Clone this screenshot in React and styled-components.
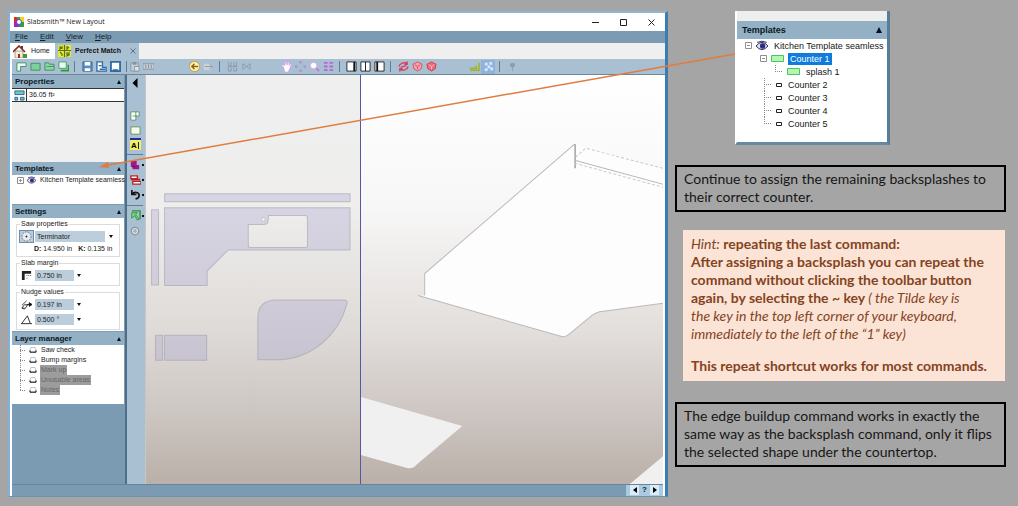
import React, { useState } from 'react'
import styled, { createGlobalStyle, css } from 'styled-components'

const GlobalStyle = createGlobalStyle`
*{
  box-sizing:border-box;
}
body{
  margin:0;
  background:#a5a5a5;
}
ul{
  list-style:none;
  margin:0;
  padding:0;
}
button{
  font:inherit;
  color:inherit;
  padding:0;
  border:0;
  background:none;
}
`

const sans = '"Liberation Sans", Arial, sans-serif'

const Page = styled.main`
position:relative;
display:grid;
grid-template-columns:minmax(0, 1fr) 331px;
gap:7px;
min-height:100vh;
padding:11px 12px 9px 8px;
`

const Window = styled.section`
display:flex;
flex-direction:column;
border:2px solid #7fb2d6;
border-top-color:#8fb4cf;
border-right:3px solid #3b7db3;
border-bottom:1px solid #6c93ad;
background:#fff;
font:7px/10px ${sans};
color:#222;
`

const TitleBar = styled.header`
display:flex;
align-items:center;
height:18px;
padding-left:4px;
background:#fff;
font:7px/12px "Open Sans", sans-serif;
color:#222;
& > h1{
  margin:0 auto 0 3px;
  font:inherit;
}
`

const WinButton = styled.button`
width:28px;
height:18px;
display:grid;
place-items:center;
`

const MenuBar = styled.nav`
display:flex;
gap:12px;
height:12px;
padding-left:5px;
background:#7b9bb3;
font-size:8px;
line-height:12px;
color:#101c28;
`

const Tabs = styled.nav`
display:flex;
height:16px;
background:#efefef;
`

const Tab = styled.button`
display:flex;
align-items:center;
gap:4px;
height:16px;
padding:0 3px;
background:${p => p.$active ? '#a9c0d3' : '#fff'};
font-weight:${p => p.$active ? 700 : 400};
width:${p => p.$active ? '84px' : '45px'};
color:#141414;
& > svg:last-child{
  margin-left:auto;
}
`

const Toolbar = styled.div`
display:flex;
align-items:center;
height:16px;
background:#a9c0d3;
border-bottom:1px solid #6f8599;
margin-left:2px;
`

const Group = styled.div`
display:flex;
margin-left:${p => p.$before || 0}px;
`

const Tool = styled.button`
position:relative;
display:grid;
place-items:center;
width:14px;
height:${p => p.$tall ? 15 : 14}px;
background:${p => p.$on ? '#8fb3dc' : 'none'};
${p => p.$menu && css`
&::after{
  content:'';
  position:absolute;
  right:-2px;
  top:7px;
  width:2px;
  height:2px;
  background:#111;
}
`}
`

const Sep = styled.span`
width:1px;
height:11px;
margin-left:4px;
background:#5f7d96;
`

const Body = styled.div`
display:flex;
flex:1;
min-height:0;
margin:0 2px;
`

const Sidebar = styled.aside`
width:115px;
flex:none;
background:#7b9bb3;
border-right:2px solid #4f6f88;
padding-right:1px;
`

const Head = styled.button`
display:flex;
align-items:center;
justify-content:space-between;
width:100%;
height:${p => p.$large ? 18 : 13}px;
padding:0 ${p => p.$large ? 5 : 3}px;
background:#93b0c5;
font-weight:700;
font-size:${p => p.$large ? 9 : 8}px;
color:#0c1722;
`

const Content = styled.div`
height:${p => p.$height}px;
margin-bottom:${p => p.$after || 0}px;
background:${p => p.$grey ? '#efefef' : '#fff'};
`

const AreaRow = styled.div`
display:flex;
align-items:center;
height:14px;
border-bottom:1px solid #333;
border-top:1px solid #333;
background:#fff;
& > span{
  width:15px;
  height:13px;
  display:grid;
  place-items:center;
  border-right:1px solid #333;
  margin-right:2px;
}
`

const TreeRow = styled.li`
display:flex;
align-items:center;
height:${p => p.$large ? 13 : 10}px;
gap:${p => p.$large ? 4 : 3}px;
padding-left:${p => p.$indent || 0}px;
white-space:nowrap;
& > svg{
  flex:none;
}
& > span{
  padding:0 ${p => p.$large ? 2 : 1}px;
  ${p => p.$selected && 'background:#0f7bdc; color:#fff;'}
  ${p => p.$disabled && 'background:#9c9c9c; color:#666;'}
}
`

const SettingsForm = styled.form`
padding:1px 4px 0 4px;
`

const Fieldset = styled.fieldset`
min-width:0;
height:${p => p.$height}px;
margin:0 0 1px;
padding:1px 0 0 2px;
border:1px solid #dcdcdc;
& > legend{
  height:10px;
  padding:0 1px;
  margin-left:1px;
}
`

const Field = styled.label`
display:flex;
align-items:center;
height:13px;
margin-bottom:2px;
& > i{
  display:grid;
  place-items:center;
  width:15px;
  height:13px;
  margin-right:1px;
  ${p => p.$framed && 'background:#b9cddd; border:1px solid #6b8cab;'}
}
& > select{
  appearance:none;
  width:${p => p.$wide ? 70 : 39}px;
  height:11px;
  padding:0 2px;
  border:0;
  border-radius:0;
  background:#bccddb;
  font:inherit;
  color:#222;
  margin-right:${p => p.$wide ? 4 : 3}px;
}
`

const Blade = styled.p`
display:flex;
gap:6px;
margin:0 0 0 15px;
line-height:8px;
white-space:nowrap;
`

const Strip = styled.div`
display:flex;
flex-direction:column;
align-items:center;
width:19px;
flex:none;
padding:1px 2px 0 0;
background:#a9c0d3;
border-right:1px solid #c9c6c4;
& > hr{
  width:16px;
  margin:3px 0 2px;
  border:0;
  border-top:1px solid #5f7d96;
}
`

const StripGroup = styled.div`
margin-top:${p => p.$before || 0}px;
`

const Pane = styled.div`
flex:${p => p.$grow} 1 0;
min-width:0;
overflow:hidden;
background:${p => p.$view3d
    ? 'linear-gradient(#fff 0%, #f8f7f7 32%, #e2dedb 63%, #d0c9c6 80%, #bab0a9 100%)'
    : 'linear-gradient(#efefef 0%, #efeeed 32%, #dedad7 63%, #cfc9c5 80%, #bab0a9 100%)'};
border-right:${p => p.$view3d ? '0' : '1px solid #5557a0'};
& > svg{
  display:block;
  width:100%;
  height:100%;
}
`

const StatusBar = styled.footer`
display:flex;
justify-content:flex-end;
height:12px;
margin:0 2px;
background:#7b9bb3;
border-top:1px solid #66849b;
`

const Pager = styled.div`
display:flex;
gap:1px;
padding:0 4px;
background:#a9cbe2;
& > button{
  width:9px;
  height:10px;
  display:grid;
  place-items:center;
  background:#dcebf5;
  font:700 8px/10px ${sans};
}
& > button:nth-child(2){
  background:none;
}
`

const Notes = styled.aside`
display:flex;
flex-direction:column;
font:14px/18px Lato, Carlito, Calibri, sans-serif;
color:#161616;
`

const Inset = styled.section`
width:155px;
height:134px;
margin:0 0 20px 60px;
padding-top:10px;
border-left:2px solid #fff;
border-right:3px solid #557c98;
border-bottom:3px solid #6489a3;
background:#eeeeee;
font:9px/12px ${sans};
`

const Note = styled.p`
margin:0;
padding:3px 7px 4px;
border:2px solid #000;
white-space:nowrap;
`

const Hint = styled.div`
margin:18px 1px 21px 8px;
padding:5px 8px 6px;
background:#fbe4d5;
color:#84431f;
font-weight:700;
white-space:nowrap;
& > p{
  margin:0;
}
& > p + p{
  margin-top:14px;
}
& em{
  font-weight:400;
}
`

const Arrow = styled.svg`
position:absolute;
left:0;
top:0;
width:740px;
height:180px;
pointer-events:none;
`

const icons = {
  shapeL: <path d="M1 2h10v4H5v5H1z" fill="#eafaf0" stroke="#3e8c62" />,
  rect: <path d="M1 2.500h10v7.500H1z" fill="#7fcf9a" stroke="#3e8c62" />,
  folder: <><path d="M1 2h4l1 1.500h5V10H1z" fill="#8dd6a3" stroke="#3e8c62" /><path d="M3 6h8" stroke="#3e8c62" /></>,
  copy: <><path d="M1 1h8v7H1z" fill="#e9fbef" stroke="#3e9c5c" /><path d="M3 10.500h8.500V4" fill="none" stroke="#2e9a3a" strokeWidth="2" /></>,
  save: <><path d="M1 1h10v10H1z" fill="#5d8ec0" stroke="#2f6ca5" /><path d="M3 1h6v4H3zM3 8h6v3H3z" fill="#fff" /></>,
  saveL: <><path d="M1 1v10h10V7H7V1z" fill="#fff" stroke="#2f6ca5" strokeWidth="1.500" /><path d="M3 5h3M4 9h6" stroke="#2f6ca5" strokeWidth="1.500" /></>,
  saveBox: <><path d="M1 1h10v10H1z" fill="#fff" stroke="#2f6ca5" strokeWidth="2" /><path d="M3 9h6v3H3z" fill="#2f6ca5" /></>,
  paste: <><path d="M2 2h8v9H2z" fill="#c3ced6" stroke="#8795a1" /><path d="M4 1h4v3H4z" fill="#8795a1" /><path d="M6 6h5v5H6z" fill="#dce3e8" stroke="#8795a1" /></>,
  ruler: <><path d="M0 3h12v6H0z" fill="#c9d0d5" stroke="#8795a1" /><path d="M3 4v4M6 4v4M9 4v4" stroke="#7e8b96" /></>,
  back: <><circle cx="6" cy="6" r="5.500" fill="#fff3b8" stroke="#c99d2c" /><path d="M10 6H3M6 3 3 6l3 3" fill="none" stroke="#8a6310" strokeWidth="1.500" /></>,
  next: <><path d="M1 3h8v7H1z" fill="#c9d2d8" /><path d="M2 6h8M7 3l3 3-3 3" fill="none" stroke="#8e9aa4" /></>,
  join: <path d="M1.500 1v4h3V1M7.500 1v4h3V1M1.500 7v4h3V7M7.500 7v4h3V7M1 6h10" stroke="#8a9aa8" fill="none" />,
  joinS: <path d="M2 3v6M10 3v6M2 3l4 3 4-3M2 9l4-3 4 3" stroke="#8a9aa8" fill="none" />,
  hand: <path d="M3 7 1 5l1-1 2 1-.500-3.500 1-.500L5.500 4V.500h1.200L7 4l1-3 1 .300L8.700 5l1.800-2 .800.800L9 9.500 8 12H4z" fill="#fff" stroke="#e08df0" strokeWidth=".700" />,
  move: <path d="M6 0v3M6 9v3M0 6h3M9 6h3M4 2l2-2 2 2M4 10l2 2 2-2M2 4 0 6l2 2M10 4l2 2-2 2" fill="none" stroke="#b582d6" />,
  zoom: <><circle cx="5" cy="5" r="3.500" fill="#fff" stroke="#e6a5ee" /><path d="m8 8 3 3" stroke="#c078d6" strokeWidth="2" /></>,
  grid: <path d="M1 1h4v2H1zM7 1h4v2H7zM1 5h4v2H1zM7 5h4v2H7zM1 9h4v2H1zM7 9h4v2H7z" fill="#b765d8" />,
  paneR: <><path d="M1 1h10v10H1z" fill="#fff" stroke="#222" /><path d="M9 1v10" stroke="#111" strokeWidth="2" /></>,
  paneM: <><path d="M1 1h10v10H1z" fill="#fff" stroke="#222" /><path d="M6 1v10" stroke="#111" /></>,
  paneL: <><path d="M1 1h10v10H1z" fill="#fff" stroke="#222" /><path d="M3.500 1v10" stroke="#111" strokeWidth="2" /></>,
  rotate: <path d="M1 6c1-4 6-5 9-3M10 .500V3.500H7M11 6c-1 4-6 5-9 3M2 11.500V8.500h3M3 7l6-2" fill="none" stroke="#d8405c" strokeWidth="1.500" />,
  cube: <><path d="m6 1 5 2.500-1 5L6 11 2 8.500l-1-5z" fill="#f1a4ad" stroke="#d9505f" /><path d="m3 4 3 2 3-2M6 6v3" fill="none" stroke="#d9505f" /></>,
  cubeFull: <><path d="m6 1 5 2.500-1 5L6 11 2 8.500l-1-5z" fill="#ee6a78" stroke="#cf3e50" /><path d="m3 4 3 2 3-2M6 6v3" fill="none" stroke="#fbd" /></>,
  slope: <path d="M1 10h10V2M1 8h7V5" fill="none" stroke="#a3b51e" strokeWidth="1.600" />,
  nodes: <path d="M2 2h3v3H2zM7 1h3v3H7zM5 5h3v3H5zM8 7h3v3H8zM2 8h3v3H2z" fill="#dbe9f7" />,
  pin: <path d="M6 2v9M4 3h4v3H4z" fill="#8d9ca8" stroke="#8d9ca8" />,
  collapse: <path d="M9 0v12L3 6z" fill="#000" />,
  piece: <><path d="M1 1h10v5H7v5H1z" fill="#fff" stroke="#5b7f64" /><path d="M7 1v5H3" fill="none" stroke="#2f9c3a" /></>,
  slab: <path d="M1 2h10v8H1z" fill="#f3fae6" stroke="#6c8a70" />,
  magenta: <><path d="M1 1h7v5h3v5H3V8H1z" fill="#a0168e" /><path d="M2 8h4" stroke="#401060" /></>,
  stack: <><path d="M1 2h7v3H1zM3 8h9v3H3z" fill="#fff" stroke="#b8232b" strokeWidth="1.500" /><path d="M1 6h10" stroke="#b8232b" strokeWidth="2" /></>,
  undo: <path d="M2 1v5h5M2 6c3-4 8-2 8 1 0 2-1 3-4 4" fill="none" stroke="#161616" strokeWidth="1.800" />,
  select: <><path d="M2 1h9v9" fill="none" stroke="#27933a" strokeWidth="1.500" /><path d="M2 3h6L6 5l4 5-2 1-3-5-3 3z" fill="#7be07b" stroke="#27933a" /></>,
  gear: <><circle cx="6" cy="6" r="4.500" fill="#d7dde1" stroke="#86929c" strokeWidth="1.500" /><circle cx="6" cy="6" r="1.500" fill="none" stroke="#86929c" /></>,
  area: <path d="M1 1h10v4H1zM1 8h3v3H1zM7 8h4v3H7z" fill="#72c4d4" stroke="#27647c" />,
  blade: <><circle cx="6" cy="6" r="5" fill="#e3eaf0" stroke="#6b7680" strokeDasharray="2 1" /><path d="M6 5v2M5 6h2" stroke="#223" /></>,
  margin: <><path d="M1 1h10v3H4v7H1z" fill="#222" /><path d="M6 6h5M6 9h2" stroke="#555" strokeDasharray="1 1" /></>,
  nudge: <><path d="M1 7 6 2M1 10l3-4 3 1-3 4zM1 10h3" fill="none" stroke="#333" /><path d="M6 6h3M9 4l3 2-3 2z" fill="#111" stroke="#111" /></>,
  angle: <path d="M0 10.500h12M1 10l6-8 3 8" fill="none" stroke="#222" />,
}

const Icon = ({ name, size = 12 }) => (
  <svg width={size} height={size} viewBox="0 0 12 12" aria-hidden="true">{icons[name]}</svg>
)

const Up = ({ size = 4 }) => (
  <svg width={size} height={size} viewBox="0 0 4 4" aria-hidden="true"><path d="M2 0 4 4H0z" fill="#05101c" /></svg>
)

const Down = () => (
  <svg width="4" height="3" viewBox="0 0 4 3" aria-hidden="true"><path d="M0 0h4L2 3z" fill="#111" /></svg>
)

const Eye = ({ size = 9 }) => (
  <svg width={size} height={size} viewBox="0 0 10 10" aria-hidden="true">
    <path d="M0 5q5-6 10 0-5 6-10 0z" fill="#e4e4f2" stroke="#25255a" strokeWidth=".800" />
    <circle cx="5.500" cy="5" r="2.200" fill="#2c2c88" />
    <path d="M1 2q4-2 8 0" fill="none" stroke="#25255a" strokeWidth=".800" />
  </svg>
)

const Expander = ({ open }) => (
  <svg width="7" height="7" viewBox="0 0 7 7" aria-hidden="true">
    <path d={open ? 'M.500.500h6v6h-6z M2 3.500h3' : 'M.500.500h6v6h-6z M2 3.500h3M3.500 2v3'} fill="#fff" stroke="#8e8e8e" />
  </svg>
)

// dotted elbow to the left of a leaf, the stem reaches up to the row above
const Branch = ({ last, height = 10, width = 8 }) => (
  <svg width={width} height={height} aria-hidden="true">
    <path d={`M.500 0v${last ? height / 2 : height}M0 ${Math.floor(height / 2) + 0.5}h${width}`} fill="none" stroke="#888" strokeDasharray="1 1" />
  </svg>
)

const Swatch = ({ green }) => green
  ? <svg width="13" height="7" aria-hidden="true"><path d="M.500.500h12v6h-12z" fill="#b4f5b4" stroke="#4fc45e" /></svg>
  : <svg width="6" height="4" aria-hidden="true"><path d="M.500.500h5v3h-5z" fill="#fff" stroke="#222" /></svg>

const Layer = () => (
  <svg width="8" height="6" viewBox="0 0 8 6" aria-hidden="true">
    <path d="M1 3 2 .500h4L7 3v2H1z" fill="#fff" stroke="#999" strokeWidth=".600" />
    <path d="M1 3.500v1.700h6V3.500" fill="none" stroke="#111" />
  </svg>
)

const toolbar = [
  { before: 2, tools: ['shapeL', 'rect', 'folder', 'copy'], sep: true },
  { before: 5, tools: ['save', 'saveL', 'saveBox'], sep: true },
  { before: 0, tools: ['paste', 'ruler'] },
  { before: 32, tools: ['back', 'next'], sep: true },
  { before: 5, tools: ['join', 'joinS'] },
  { before: 26, tools: ['hand', 'move', 'zoom', 'grid'], sep: true },
  { before: 4, tools: ['paneR', 'paneM', 'paneL'], sep: true },
  { before: 5, tools: ['rotate', 'cube', 'cubeFull'] },
  { before: 29, tools: ['slope', 'nodes'], sep: true },
  { before: 5, tools: ['pin'] },
]

const layers = [
  { name: 'Saw check' },
  { name: 'Bump margins' },
  { name: 'Mark up', disabled: true },
  { name: 'Unusable areas', disabled: true },
  { name: 'Notes', disabled: true },
]

const menus = ['File', 'Edit', 'View', 'Help']
const counters = ['Counter 2', 'Counter 3', 'Counter 4', 'Counter 5']

function Select({ icon, label, value, wide, framed }) {
  return (
    <Field $wide={wide} $framed={framed}>
      <i><Icon name={icon} size={11} /></i>
      <select aria-label={label} defaultValue={value}>
        <option>{value}</option>
      </select>
      <Down />
    </Field>
  )
}

function Panel({ title, height, after, grey, children }) {
  const [open, setOpen] = useState(true)
  return (
    <section>
      <Head onClick={() => setOpen(!open)}>{title}<Up /></Head>
      {open && <Content $height={height} $after={after} $grey={grey}>{children}</Content>}
    </section>
  )
}

function LeftPanels() {
  return (
    <Sidebar>
      <Panel title="Properties" height={74} grey>
        <AreaRow><span><Icon name="area" size={11} /></span>36.05 ft²</AreaRow>
      </Panel>
      <Panel title="Templates" height={29} after={1}>
        <ul>
          <TreeRow $indent={5}><Expander /><Eye /><span>Kitchen Template seamless</span></TreeRow>
        </ul>
      </Panel>
      <Panel title="Settings" height={113} after={1}>
        <SettingsForm>
          <Fieldset $height={38}>
            <legend>Saw properties</legend>
            <Select icon="blade" label="Saw" value="Terminator" wide framed />
            <Blade><span><b>D:</b> 14.950 in</span><span><b>K:</b> 0.135 in</span></Blade>
          </Fieldset>
          <Fieldset $height={28}>
            <legend>Slab margin</legend>
            <Select icon="margin" label="Slab margin" value="0.750 in" />
          </Fieldset>
          <Fieldset $height={43}>
            <legend>Nudge values</legend>
            <Select icon="nudge" label="Nudge distance" value="0.197 in" />
            <Select icon="angle" label="Nudge angle" value="0.500 °" />
          </Fieldset>
        </SettingsForm>
      </Panel>
      <Panel title="Layer manager" height={59}>
        <ul>
          {
            layers.map((item, idx) => (
              <TreeRow key={item.name} $indent={8} $disabled={item.disabled}>
                <Branch last={idx === layers.length - 1} width={6} />
                <Layer />
                <span>{item.name}</span>
              </TreeRow>
            ))
          }
        </ul>
      </Panel>
    </Sidebar>
  )
}

function PlanView() {
  return (
    <svg viewBox="146 76 213 408" preserveAspectRatio="xMinYMin meet">
      <g fill="#a9a4cf" fillOpacity=".34" stroke="#9d9da6" strokeOpacity=".55">
        <path d="M164.500 194.500h185v8h-185z" />
        <path d="M151.500 210.500h7v75h-7z" />
        <path fillRule="evenodd" d="M164.500 208.500h185v42H228l-21 21v14.500h-42.500zM268 216h37q2 0 2 2v28q0 2-2 2h-55q-2 0-2-2v-21h15q5 0 5-5z" />
        <path d="M257.500 360V318Q258 300.500 276 300.500h68q4 0 2 5C338 335 312 358 280 360z" />
        <path d="M155.500 335.500h7v25h-7zM164.500 335.500h42v25h-42z" />
      </g>
      <circle cx="263" cy="220" r="2" fill="#eee" stroke="#aaa" strokeWidth=".500" />
    </svg>
  )
}

function SolidView() {
  return (
    <svg viewBox="360 76 303 408" preserveAspectRatio="xMinYMin slice">
      <path d="M573 145 423 274v22h-6l144 41q4 0 6-2l23-19q4-3 8-4l67-9V170z" fill="#fefdfe" />
      <g fill="none" stroke="#bbb8b8">
        <path d="M573 145 423.500 274v22" />
        <path d="M417 296l144 41q4 0 6-2l23-19q4-3 8-4l67-9" />
        <path d="M573.500 145v24" stroke="#777" />
        <path d="m573 161 92 25" />
        <path d="m573 164 92 25M574 158l10-9 81 21" stroke="#cbc9c9" strokeDasharray="3 2" />
      </g>
      <path d="m360 397 101 29-46 39q-3 4-9 3l-46-13z" fill="#f1f0f0" />
      <path d="m665 453-37 31v3h37z" fill="#f1f0f0" />
    </svg>
  )
}

function AppWindow() {
  return (
    <Window>
      <TitleBar>
        <svg width="10" height="10" viewBox="0 0 10 10" aria-hidden="true">
          <path d="M0 0h5v5H0z" fill="#e8271d" />
          <path d="M5 0h5v5H5z" fill="#f4d31c" />
          <path d="M0 5h5v5H0z" fill="#a424b8" />
          <path d="M5 5h5v5H5z" fill="#2fa042" />
          <path d="M3 0h3v2H3z" fill="#37a24a" />
          <circle cx="5" cy="5" r="2.500" fill="#fff" stroke="#3552d8" />
        </svg>
        <h1>Slabsmith™ New Layout</h1>
        <WinButton aria-label="Minimize"><svg width="7" height="7"><path d="M0 3.500h7" stroke="#222" /></svg></WinButton>
        <WinButton aria-label="Maximize"><svg width="7" height="7"><path d="M.500.500h6v6h-6z" fill="none" stroke="#222" /></svg></WinButton>
        <WinButton aria-label="Close"><svg width="7" height="7"><path d="m.500.500 6 6m0-6-6 6" stroke="#222" /></svg></WinButton>
      </TitleBar>
      <MenuBar>
        {menus.map(m => <button key={m}><u>{m[0]}</u>{m.slice(1)}</button>)}
      </MenuBar>
      <Tabs>
        <Tab>
          <svg width="14" height="13" viewBox="0 0 14 13" aria-hidden="true">
            <path d="M2 6h8v7H2z" fill="#f6edd0" stroke="#8a6a4a" strokeWidth=".600" />
            <path d="M0 7 6 1l6 6" fill="none" stroke="#7a2c26" strokeWidth="1.600" />
            <path d="M8 1h2v3H8z" fill="#7a2c26" />
            <path d="M5 9h2v4H5z" fill="#a02f2a" />
            <path d="M10 9h4v4h-4z" fill="#3f9a3c" />
          </svg>
          <span>Home</span>
        </Tab>
        <Tab $active>
          <svg width="13" height="12" viewBox="0 0 13 12" aria-hidden="true">
            <path d="M0 0h13v12H0z" fill="#e9ec2a" />
            <path d="M0 5.500h13M6.500 0v12M2 1v3l2-2v2M9 1v3l2-2M2 7l2 2v2M9 7v4l2-3v3" fill="none" stroke="#56702a" strokeWidth="1.200" />
          </svg>
          <span>Perfect Match</span>
          <svg width="6" height="6" aria-hidden="true"><path d="m.500.500 5 5m0-5-5 5" stroke="#5d7183" /></svg>
        </Tab>
      </Tabs>
      <Toolbar>
        {
          toolbar.map((group, idx) => (
            <React.Fragment key={idx}>
              <Group $before={group.before}>
                {group.tools.map(t => <Tool key={t} aria-label={t} $on={t === 'nodes'}><Icon name={t} size={11} /></Tool>)}
              </Group>
              {group.sep && <Sep />}
            </React.Fragment>
          ))
        }
      </Toolbar>
      <Body>
        <LeftPanels />
        <Strip>
          <Tool aria-label="collapse"><Icon name="collapse" size={10} /></Tool>
          <StripGroup $before={19}>
            <Tool aria-label="piece"><Icon name="piece" size={10} /></Tool>
            <Tool aria-label="slab"><Icon name="slab" size={11} /></Tool>
            <Tool aria-label="text">
              <svg width="11" height="12" viewBox="0 0 11 12" aria-hidden="true">
                <path d="M0 2h11v10H0z" fill="#f4ee62" />
                <path d="M0 1h11" stroke="#1d2f9a" strokeWidth="2" />
                <text x="1" y="10" fontSize="8" fontWeight="700" fontFamily="Liberation Sans">A</text>
                <path d="M8.500 4v7" stroke="#222" />
              </svg>
            </Tool>
          </StripGroup>
          <hr />
          <StripGroup>
            <Tool $tall $menu aria-label="splash"><Icon name="magenta" size={10} /></Tool>
            <Tool $tall $menu aria-label="buildup"><Icon name="stack" size={11} /></Tool>
            <Tool $tall $menu aria-label="undo"><Icon name="undo" size={11} /></Tool>
          </StripGroup>
          <hr />
          <StripGroup>
            <Tool $tall $menu aria-label="select"><Icon name="select" size={11} /></Tool>
            <Tool $tall aria-label="options"><Icon name="gear" size={10} /></Tool>
          </StripGroup>
        </Strip>
        <Pane $grow={214}><PlanView /></Pane>
        <Pane $grow={303} $view3d><SolidView /></Pane>
      </Body>
      <StatusBar>
        <Pager>
          <button aria-label="Previous"><svg width="4" height="6"><path d="M4 0v6L0 3z" /></svg></button>
          <button>?</button>
          <button aria-label="Next"><svg width="4" height="6"><path d="M0 0v6l4-3z" /></svg></button>
        </Pager>
      </StatusBar>
    </Window>
  )
}

function TemplatesInset() {
  return (
    <Inset>
      <Head $large>Templates<Up size={6} /></Head>
      <Content $height={103}>
        <ul>
          <TreeRow $large $indent={8}><Expander open /><Eye size={12} /><span>Kitchen Template seamless</span></TreeRow>
          <TreeRow $large $indent={23} $selected><Expander open /><Swatch green /><span>Counter 1</span></TreeRow>
          <TreeRow $large $indent={38}><Branch last height={13} /><Swatch green /><span>splash 1</span></TreeRow>
          {
            counters.map((name, idx) => (
              <TreeRow key={name} $large $indent={27}>
                <Branch last={idx === counters.length - 1} height={13} /><Swatch /><span>{name}</span>
              </TreeRow>
            ))
          }
        </ul>
      </Content>
    </Inset>
  )
}

function App() {
  return (
    <>
      <GlobalStyle />
      <Page>
        <AppWindow />
        <Notes>
          <TemplatesInset />
          <Note>
            Continue to assign the remaining backsplashes to<br />
            their correct counter.
          </Note>
          <Hint>
            <p>
              <em>Hint:</em> repeating the last command:<br />
              After assigning a backsplash you can repeat the<br />
              command without clicking the toolbar button<br />
              again, by selecting the ~ key <em>( the Tilde key is<br />
              the key in the top left corner of your keyboard,<br />
              immediately to the left of the “1” key)</em>
            </p>
            <p>This repeat shortcut works for most commands.</p>
          </Hint>
          <Note>
            The edge buildup command works in exactly the<br />
            same way as the backsplash command, only it flips<br />
            the selected shape under the countertop.
          </Note>
        </Notes>
        <Arrow viewBox="0 0 740 180" aria-hidden="true">
          <path d="M735 54 108 165" stroke="#e07c40" strokeWidth="1.500" />
          <path d="m99 167 9-5 1 6z" fill="#e07c40" />
        </Arrow>
      </Page>
    </>
  )
}

export default App
